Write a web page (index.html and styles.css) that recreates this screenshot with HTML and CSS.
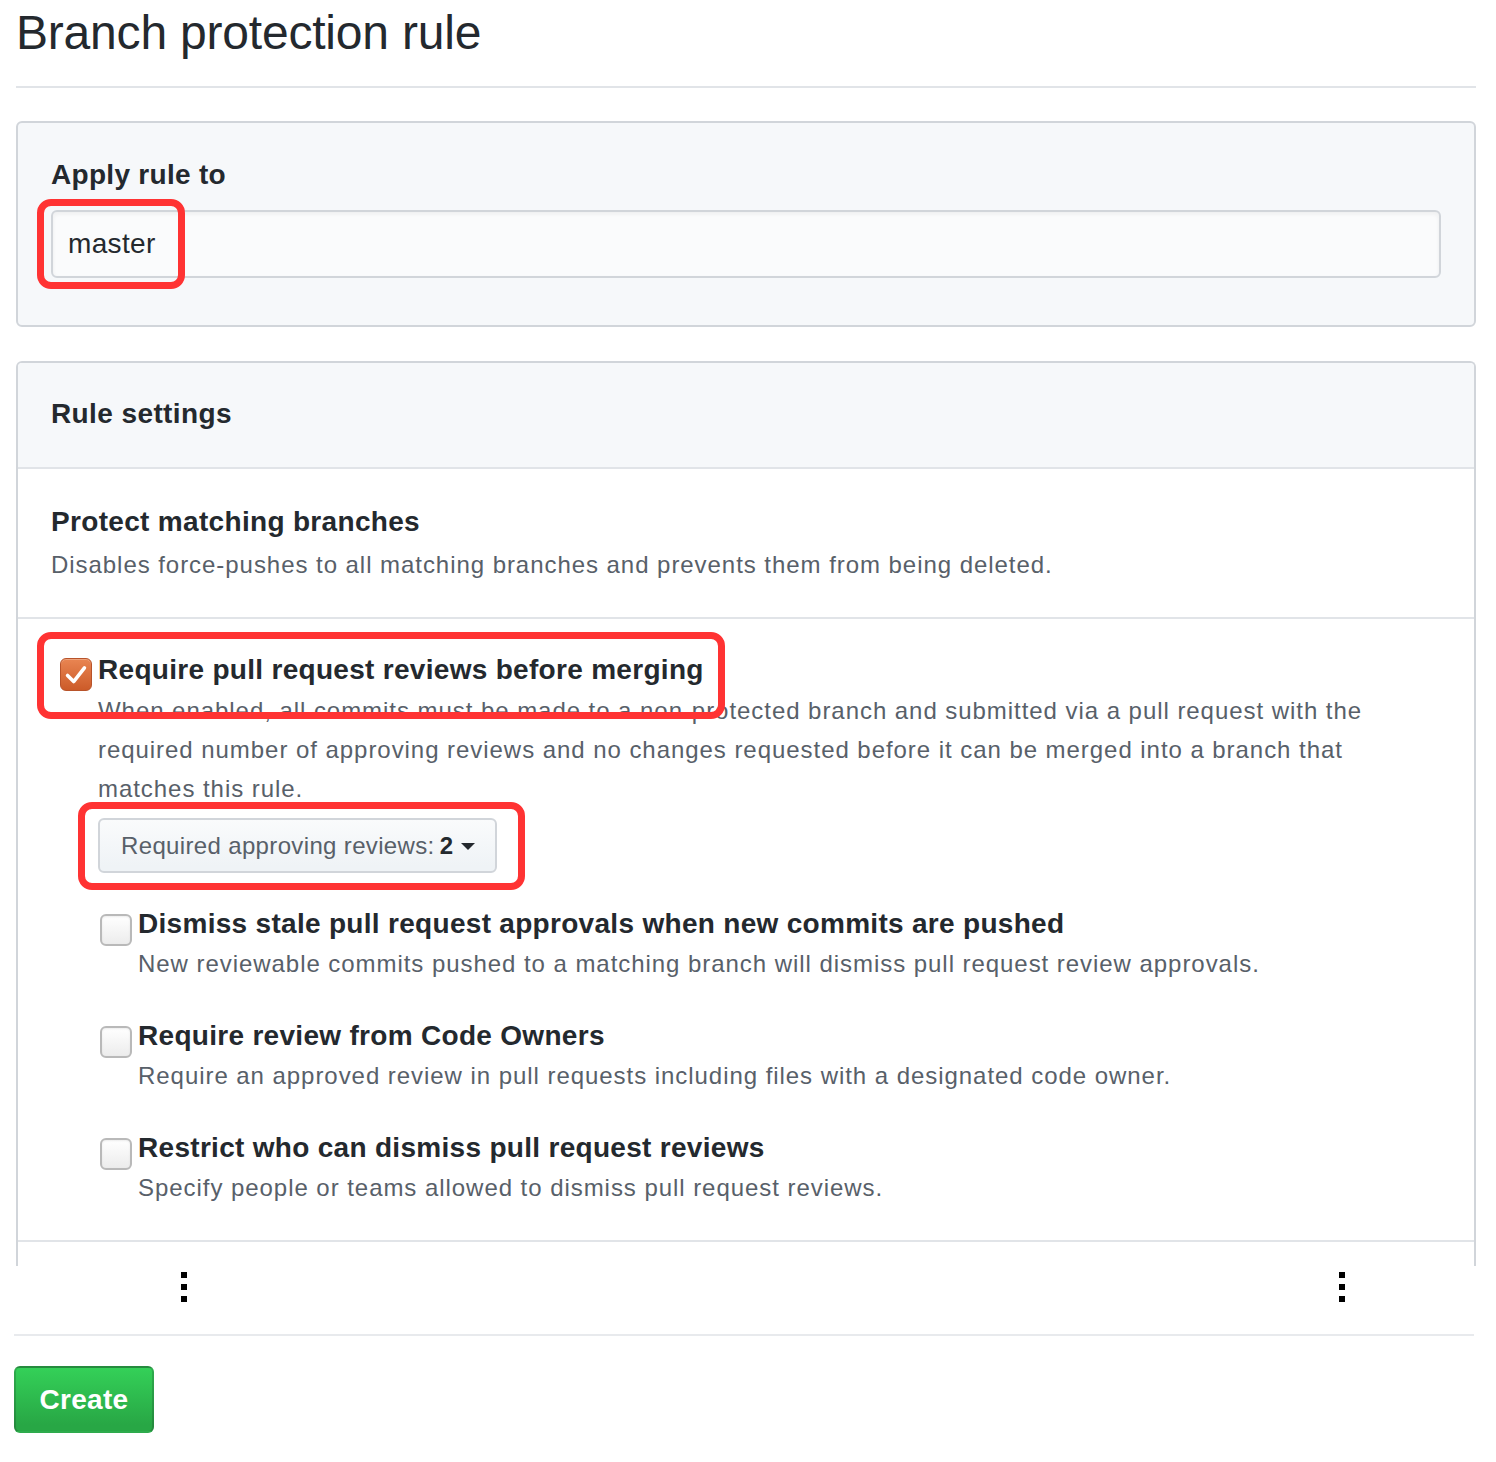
FILE: index.html
```html
<!DOCTYPE html>
<html lang="en">
<head>
<meta charset="utf-8">
<title>Branch protection rule</title>
<link rel="stylesheet" href="styles.css">
</head>
<body>
<div class="page">
  <h1 class="title">Branch protection rule</h1>

  <div class="box apply">
    <div class="label">Apply rule to</div>
    <div class="input">master</div>
  </div>

  <div class="box rules">
    <div class="box-header">Rule settings</div>
    <div class="section">
      <div class="sec-title">Protect matching branches</div>
      <div class="sec-desc">Disables force-pushes to all matching branches and prevents them from being deleted.</div>
    </div>
    <div class="section">
      <div class="opt">
        <span class="cb checked">
          <svg viewBox="0 0 32 32" width="32" height="32"><path d="M7 16.5 L13.5 23 L25 8.5" fill="none" stroke="#fff" stroke-width="3.8" stroke-linecap="round" stroke-linejoin="round"/></svg>
        </span>
        <div class="opt-body">
          <div class="opt-title">Require pull request reviews before merging</div>
          <div class="opt-desc main-desc">When enabled, all commits must be made to a non-protected branch and submitted via a pull request with the required number of approving reviews and no changes requested before it can be merged into a branch that matches this rule.</div>
          <button class="select" type="button"><span>Required approving reviews:</span><b>2</b><span class="caret"></span></button>

          <div class="sub">
            <span class="cb"></span>
            <div class="sub-body">
              <div class="opt-title">Dismiss stale pull request approvals when new commits are pushed</div>
              <div class="opt-desc">New reviewable commits pushed to a matching branch will dismiss pull request review approvals.</div>
            </div>
          </div>
          <div class="sub">
            <span class="cb"></span>
            <div class="sub-body">
              <div class="opt-title">Require review from Code Owners</div>
              <div class="opt-desc">Require an approved review in pull requests including files with a designated code owner.</div>
            </div>
          </div>
          <div class="sub">
            <span class="cb"></span>
            <div class="sub-body">
              <div class="opt-title">Restrict who can dismiss pull request reviews</div>
              <div class="opt-desc">Specify people or teams allowed to dismiss pull request reviews.</div>
            </div>
          </div>
        </div>
      </div>
    </div>
    <div class="tail"></div>
  </div>

  <div class="ellipsis-row">
    <div class="vdots"><i></i><i></i><i></i></div>
    <div class="vdots"><i></i><i></i><i></i></div>
  </div>

  <div class="footer">
    <button class="create" type="button">Create</button>
  </div>

  <div class="mark mark-1"></div>
  <div class="mark mark-2"></div>
  <div class="mark mark-3"></div>
</div>
</body>
</html>
```

FILE: styles.css
```css
* { box-sizing: border-box; }

html, body {
  margin: 0;
  padding: 0;
  background: #fff;
}

body {
  font-family: "Liberation Sans", Arial, Helvetica, sans-serif;
  color: #24292e;
}

.page {
  position: relative;
  width: 1496px;
  padding-left: 14px;
}

.title {
  margin: 0 0 0 2px;
  width: 1460px;
  padding: 3px 0 23px;
  font-size: 48px;
  line-height: 60px;
  font-weight: normal;
  letter-spacing: -0.2px;
  color: #24292e;
  border-bottom: 2px solid #e1e4e8;
}

.box {
  width: 1460px;
  margin-left: 2px;
  border: 2px solid #d1d5da;
  border-radius: 6px;
}

.apply {
  margin-top: 33px;
  background: #f6f8fa;
  padding: 32px 33px 47px;
}

.label {
  font-size: 28px;
  line-height: 40px;
  font-weight: bold;
  letter-spacing: 0.3px;
  margin-bottom: 15px;
}

.input {
  height: 68px;
  border: 2px solid #d1d5da;
  border-radius: 6px;
  background: #fafbfc;
  box-shadow: inset 0 2px 4px rgba(27,31,35,0.06);
  padding: 0 15px;
  font-size: 28px;
  line-height: 64px;
  letter-spacing: 0.35px;
  color: #24292e;
}

.rules {
  margin-top: 34px;
  border-bottom: none;
  border-bottom-left-radius: 0;
  border-bottom-right-radius: 0;
}

.box-header {
  background: #f6f8fa;
  border-bottom: 2px solid #e1e4e8;
  border-top-left-radius: 4px;
  border-top-right-radius: 4px;
  padding: 31px 33px 33px;
  font-size: 28px;
  line-height: 40px;
  font-weight: bold;
  letter-spacing: 0.4px;
}

.section {
  border-bottom: 2px solid #e1e4e8;
  padding: 33px 33px 32px;
}

.section + .section {
  padding-top: 31px;
  padding-left: 42px;
}

.sec-title {
  font-size: 28px;
  line-height: 40px;
  font-weight: bold;
  letter-spacing: 0.32px;
  margin-bottom: 3px;
}

.sec-desc {
  font-size: 24px;
  line-height: 40px;
  letter-spacing: 0.95px;
  color: #586069;
}

.opt {
  display: flex;
  align-items: flex-start;
}

.cb {
  flex: none;
  width: 32px;
  height: 32px;
  border-radius: 6px;
  border: 2px solid #b9b9b9;
  background: linear-gradient(#ffffff, #ececec);
  box-shadow: inset 0 1px 2px rgba(0,0,0,0.08);
}

.cb.checked {
  margin-top: 8px;
  height: 33px;
  border: 1px solid #b8532a;
  background: linear-gradient(#e98552, #cc5b29);
  box-shadow: inset 0 1px 0 rgba(255,255,255,0.25);
  display: flex;
  align-items: center;
  justify-content: center;
}

.cb.checked svg { display: block; }

.opt-body {
  margin-left: 6px;
  flex: 1;
}

.opt-title {
  font-size: 28px;
  line-height: 40px;
  font-weight: bold;
  letter-spacing: 0.3px;
  color: #24292e;
}

.opt-desc {
  font-size: 24px;
  line-height: 40px;
  letter-spacing: 0.95px;
  color: #586069;
}

.main-desc {
  line-height: 39px;
  margin-top: 1px;
}

.select {
  display: inline-flex;
  align-items: center;
  margin-top: 10px;
  height: 55px;
  padding: 0 20px 0 21px;
  border: 2px solid #d1d5da;
  border-radius: 6px;
  background: linear-gradient(#fafbfc, #eff3f6 90%);
  font-family: "Liberation Sans", Arial, Helvetica, sans-serif;
  font-size: 24px;
  letter-spacing: 0.35px;
  color: #586069;
}

.select b {
  color: #24292e;
  margin-left: 5px;
}

.caret {
  display: inline-block;
  margin-left: 8px;
  margin-top: 2px;
  width: 0;
  height: 0;
  border-left: 7px solid transparent;
  border-right: 7px solid transparent;
  border-top: 7px solid #24292e;
}

.sub {
  display: flex;
  align-items: flex-start;
  margin-top: 31px;
  padding-left: 2px;
}

.sub + .sub {
  margin-top: 32px;
}

.sub .cb {
  margin-top: 10px;
}

.sub-body {
  margin-left: 6px;
}

.tail {
  height: 24px;
}

.ellipsis-row {
  display: flex;
  justify-content: space-between;
  width: 1460px;
  padding: 6px 129px 0 167px;
  height: 70px;
  border-bottom: 2px solid #e8eaed;
}

.vdots {
  display: flex;
  flex-direction: column;
  gap: 6px;
}

.vdots i {
  display: block;
  width: 6px;
  height: 6px;
  background: #000;
}

.footer {
  padding-top: 30px;
  padding-bottom: 28px;
}

.create {
  width: 140px;
  height: 67px;
  border: 2px solid rgba(27,31,35,0.2);
  border-radius: 6px;
  background: linear-gradient(#34d058, #28a745 90%);
  color: #fff;
  font-family: "Liberation Sans", Arial, Helvetica, sans-serif;
  font-size: 28px;
  font-weight: bold;
  letter-spacing: 0.3px;
  padding: 0;
}

.mark {
  position: absolute;
  border: 7px solid #ff3333;
  border-radius: 14px;
  pointer-events: none;
}

.mark-1 { left: 37px; top: 199px; width: 148px; height: 90px; }
.mark-2 { left: 37px; top: 632px; width: 688px; height: 87px; }
.mark-3 { left: 78px; top: 802px; width: 447px; height: 88px; }
```
